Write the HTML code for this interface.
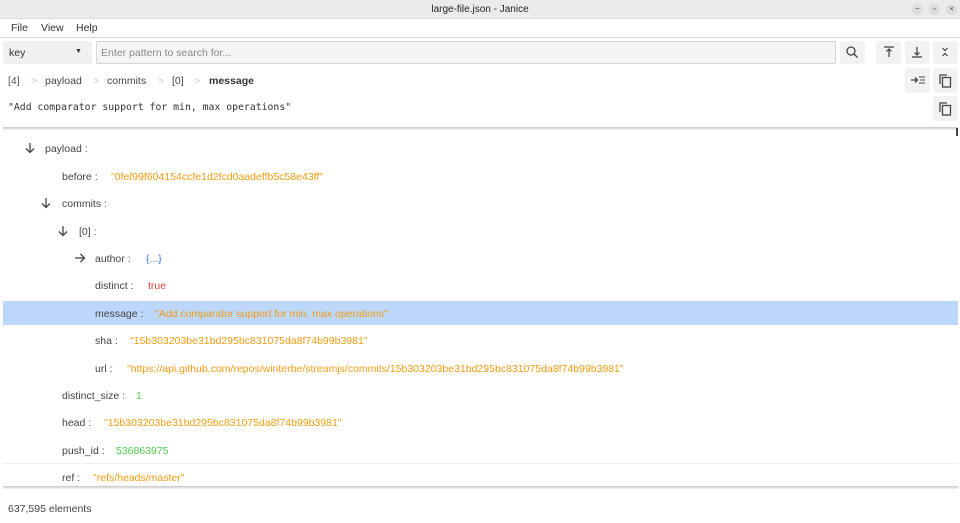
<!DOCTYPE html>
<html><head><style>
*{margin:0;padding:0;box-sizing:border-box}
body{width:960px;height:523px;background:#fff;font-family:"Liberation Sans","DejaVu Sans",sans-serif;font-size:10.5px;color:#333;position:relative;overflow:hidden}
.a{position:absolute;white-space:nowrap}
.s{color:#f39c12}.n{color:#4cd04c}.b{color:#e0443a}.o{color:#3d7bd9}
.k{color:#444}
.btn{position:absolute;background:#f2f2f2;border-radius:3px}
</style></head><body>
<div class="a" style="left:0;top:0;width:960px;height:19px;background:#ebebeb;border-bottom:1px solid #dcdcdc"></div>
<div class="a" style="left:0;top:4px;width:960px;text-align:center;font-size:10px;color:#222">large-file.json - Janice</div>
<div class="a" style="left:912px;top:4px;width:11px;height:11px;border-radius:50%;background:#dcdcdc;font-size:7px;text-align:center;line-height:10px">–</div>
<div class="a" style="left:929px;top:4px;width:11px;height:11px;border-radius:50%;background:#dcdcdc;font-size:7px;text-align:center;line-height:11px">▫</div>
<div class="a" style="left:946px;top:4px;width:11px;height:11px;border-radius:50%;background:#dcdcdc;font-size:7px;text-align:center;line-height:11px">×</div>
<div class="a" style="left:11px;top:22px">File</div>
<div class="a" style="left:41px;top:22px">View</div>
<div class="a" style="left:76px;top:22px">Help</div>
<div class="a" style="left:0;top:37px;width:960px;height:1px;background:#d8d8d8"></div>
<div class="a" style="left:3px;top:41px;width:89px;height:23px;background:#f0f0f0;border-radius:3px"></div>
<div class="a" style="left:9px;top:47px">key</div>
<div class="a" style="left:75px;top:48px;font-size:7px">▼</div>
<div class="a" style="left:96px;top:41px;width:740px;height:23px;background:#f5f5f5;border:1px solid #d6d6d6;border-radius:2px"></div>
<div class="a" style="left:101px;top:47px;color:#888">Enter pattern to search for...</div>
<div class="btn" style="left:840px;top:41px;width:25px;height:23px"></div>
<svg class="a" style="left:845px;top:45px" width="14" height="14"><circle cx="6" cy="6" r="4" fill="none" stroke="#444" stroke-width="1.3"/><line x1="9" y1="9" x2="12.5" y2="12.5" stroke="#444" stroke-width="1.4"/></svg>
<div class="btn" style="left:876px;top:41px;width:25px;height:23px"></div>
<svg class="a" style="left:882px;top:45px" width="14" height="14"><line x1="2" y1="2" x2="12" y2="2" stroke="#444" stroke-width="1.3"/><line x1="7" y1="4" x2="7" y2="12" stroke="#444" stroke-width="1.3"/><path d="M4.5 6.5 L7 4 L9.5 6.5" fill="none" stroke="#444" stroke-width="1.2"/></svg>
<div class="btn" style="left:905px;top:41px;width:25px;height:23px"></div>
<svg class="a" style="left:910px;top:45px" width="14" height="14"><line x1="2" y1="12" x2="12" y2="12" stroke="#444" stroke-width="1.3"/><line x1="7" y1="2" x2="7" y2="10" stroke="#444" stroke-width="1.3"/><path d="M4.5 7.5 L7 10 L9.5 7.5" fill="none" stroke="#444" stroke-width="1.2"/></svg>
<div class="btn" style="left:933px;top:41px;width:25px;height:23px"></div>
<svg class="a" style="left:938px;top:45px" width="14" height="14"><path d="M4.5 3 L7 5.5 L9.5 3 M4.5 11 L7 8.5 L9.5 11" fill="none" stroke="#444" stroke-width="1.2"/></svg>
<div class="a" style="left:8px;top:75px;color:#555">[4]</div>
<div class="a" style="left:31px;top:75px;color:#ccc">&gt;</div>
<div class="a" style="left:45px;top:75px;color:#444">payload</div>
<div class="a" style="left:93px;top:75px;color:#ccc">&gt;</div>
<div class="a" style="left:107px;top:75px;color:#444">commits</div>
<div class="a" style="left:158px;top:75px;color:#ccc">&gt;</div>
<div class="a" style="left:172px;top:75px;color:#444">[0]</div>
<div class="a" style="left:194px;top:75px;color:#ccc">&gt;</div>
<div class="a" style="left:209px;top:75px;color:#333;font-weight:bold">message</div>
<div class="btn" style="left:905px;top:68px;width:25px;height:25px"></div>
<svg class="a" style="left:910px;top:74px" width="16" height="12"><path d="M1 6 H7 M5 3.5 L7.5 6 L5 8.5" fill="none" stroke="#444" stroke-width="1.3"/><path d="M9 3 H15 M10 6 H15 M9 9 H15" stroke="#444" stroke-width="1.1"/></svg>
<div class="btn" style="left:933px;top:68px;width:25px;height:25px"></div>
<svg class="a" style="left:938px;top:73px" width="14" height="15"><rect x="4.5" y="4.5" width="8" height="9.5" fill="none" stroke="#444" stroke-width="1.3"/><path d="M2 11 V2 H9" fill="none" stroke="#444" stroke-width="1.3"/></svg>
<div class="a" style="left:8px;top:102px;font-family:'DejaVu Sans Mono','Liberation Mono',monospace;font-size:9.8px;color:#333">"Add comparator support for min, max operations"</div>
<div class="btn" style="left:933px;top:96px;width:25px;height:25px"></div>
<svg class="a" style="left:938px;top:101px" width="14" height="15"><rect x="4.5" y="4.5" width="8" height="9.5" fill="none" stroke="#444" stroke-width="1.3"/><path d="M2 11 V2 H9" fill="none" stroke="#444" stroke-width="1.3"/></svg>
<div class="a" style="left:3px;top:127px;width:955px;height:3px;background:linear-gradient(#c8c8c8,#f4f4f4)"></div>
<div class="a" style="left:956px;top:128px;width:2px;height:8px;background:#444"></div>
<div class="a" style="left:3px;top:301px;width:955px;height:24px;background:#bcd7fa"></div>
<div class="a" style="left:3px;top:463px;width:955px;height:1px;background:#eee"></div>
<div class="a" style="left:3px;top:486px;width:955px;height:3px;background:linear-gradient(#c8c8c8,#f4f4f4)"></div>
<svg class="a" style="left:24px;top:142px" width="12" height="12"><path d="M6 1 V10.5 M2 6.5 L6 10.5 L10 6.5" fill="none" stroke="#444" stroke-width="1.3"/></svg>
<div class="a k" style="left:45px;top:143px">payload :</div>
<div class="a k" style="left:62px;top:171px">before :</div><div class="a s" style="left:111px;top:171px">"0fef99f604154ccfe1d2fcd0aadeffb5c58e43ff"</div>
<svg class="a" style="left:40px;top:197px" width="12" height="12"><path d="M6 1 V10.5 M2 6.5 L6 10.5 L10 6.5" fill="none" stroke="#444" stroke-width="1.3"/></svg>
<div class="a k" style="left:62px;top:198px">commits :</div>
<svg class="a" style="left:57px;top:225px" width="12" height="12"><path d="M6 1 V10.5 M2 6.5 L6 10.5 L10 6.5" fill="none" stroke="#444" stroke-width="1.3"/></svg>
<div class="a k" style="left:79px;top:226px">[0] :</div>
<svg class="a" style="left:74px;top:252px" width="12" height="12"><path d="M1 6 H10.5 M6.5 2 L10.5 6 L6.5 10" fill="none" stroke="#444" stroke-width="1.3"/></svg>
<div class="a k" style="left:95px;top:253px">author :</div><div class="a o" style="left:146px;top:253px">{...}</div>
<div class="a k" style="left:95px;top:280px">distinct :</div><div class="a b" style="left:148px;top:280px">true</div>
<div class="a k" style="left:95px;top:308px">message :</div><div class="a s" style="left:155px;top:308px">"Add comparator support for min, max operations"</div>
<div class="a k" style="left:95px;top:335px">sha :</div><div class="a s" style="left:130px;top:335px">"15b303203be31bd295bc831075da8f74b99b3981"</div>
<div class="a k" style="left:95px;top:363px">url :</div><div class="a s" style="left:127px;top:363px">"https://api.github.com/repos/winterbe/streamjs/commits/15b303203be31bd295bc831075da8f74b99b3981"</div>
<div class="a k" style="left:62px;top:390px">distinct_size :</div><div class="a n" style="left:136px;top:390px">1</div>
<div class="a k" style="left:62px;top:417px">head :</div><div class="a s" style="left:104px;top:417px">"15b303203be31bd295bc831075da8f74b99b3981"</div>
<div class="a k" style="left:62px;top:445px">push_id :</div><div class="a n" style="left:116px;top:445px">536863975</div>
<div class="a k" style="left:62px;top:472px">ref :</div><div class="a s" style="left:93px;top:472px">"refs/heads/master"</div>
<div class="a" style="left:8px;top:503px;color:#444">637,595 elements</div>
</body></html>
